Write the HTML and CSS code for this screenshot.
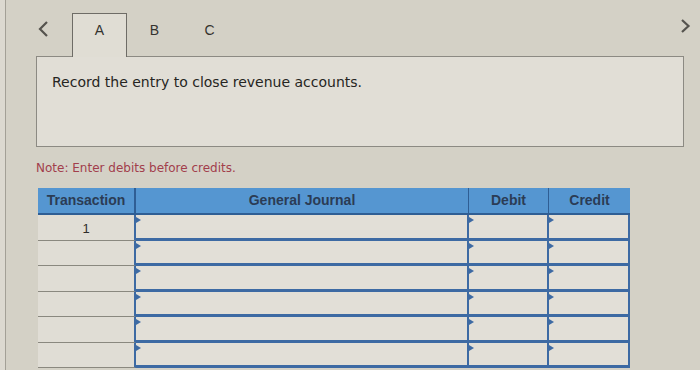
FILE: index.html
```html
<!DOCTYPE html>
<html>
<head>
<meta charset="utf-8">
<link rel="stylesheet" href="styles.css">
</head>
<body>
<div class="screen">
  <div class="edge"></div>
  <div class="page">
    <div class="nav">
      <span class="chev chev-left"><svg width="12" height="18" viewBox="0 0 12 18"><path d="M10 2 L3 9 L10 16" fill="none" stroke="#55534e" stroke-width="2.2"/></svg></span>
      <div class="tabs">
        <div class="tab active">A</div>
        <div class="tab">B</div>
        <div class="tab">C</div>
      </div>
      <span class="chev chev-right"><svg width="11" height="16" viewBox="0 0 11 16"><path d="M2 2 L8.5 8 L2 14" fill="none" stroke="#55534e" stroke-width="2.2"/></svg></span>
    </div>
    <div class="question">Record the entry to close revenue accounts.</div>
    <div class="note">Note: Enter debits before credits.</div>
    <div class="journal">
      <div class="th">Transaction</div>
      <div class="th">General Journal</div>
      <div class="th">Debit</div>
      <div class="th">Credit</div>

      <div class="tc">1</div><div class="in gj"></div><div class="in"></div><div class="in"></div>
      <div class="tc"></div><div class="in gj"></div><div class="in"></div><div class="in"></div>
      <div class="tc"></div><div class="in gj"></div><div class="in"></div><div class="in"></div>
      <div class="tc"></div><div class="in gj"></div><div class="in"></div><div class="in"></div>
      <div class="tc"></div><div class="in gj"></div><div class="in"></div><div class="in"></div>
      <div class="tc"></div><div class="in gj"></div><div class="in"></div><div class="in"></div>
    </div>
  </div>
</div>
</body>
</html>
```
FILE: styles.css
```css
html, body {
  margin: 0;
  padding: 0;
}
body {
  width: 700px;
  height: 370px;
  overflow: hidden;
  background: #d4d1c6;
  font-family: "DejaVu Sans", Verdana, sans-serif;
}
.screen {
  display: flex;
  height: 370px;
}
.edge {
  width: 5px;
  flex: none;
  background: #dcd9d0;
  border-right: 1px solid #a3a096;
}
.page {
  flex: 1;
  padding-left: 29px;
}
.nav {
  height: 56px;
  display: flex;
  align-items: flex-start;
}
.chev {
  display: block;
}
.chev-left {
  margin-top: 20px;
  margin-left: 2px;
  width: 12px;
  height: 18px;
}
.tabs {
  display: flex;
  margin-left: 23px;
  margin-top: 13px;
}
.tab {
  width: 55px;
  height: 43px;
  box-sizing: border-box;
  display: flex;
  justify-content: center;
  padding-top: 9px;
  font-family: "Liberation Sans", Arial, sans-serif;
  font-size: 14px;
  color: #34332f;
}
.tab.active {
  background: #e0ddd4;
  border: 1px solid #6e6c66;
  border-bottom: none;
  height: 44px;
  padding-top: 8px;
}
.chev-right {
  margin-left: auto;
  margin-right: 9px;
  margin-top: 18px;
  width: 11px;
  height: 16px;
}
.question {
  margin-left: 1px;
  width: 648px;
  height: 91px;
  box-sizing: border-box;
  border: 1px solid #8c8a83;
  background: #e1ded6;
  padding: 17px 0 0 15px;
  font-size: 14px;
  color: #262522;
}
.note {
  margin-top: 14px;
  margin-left: 1px;
  font-size: 12px;
  color: #a23e4c;
}
.journal {
  margin-top: 13px;
  margin-left: 3px;
  display: grid;
  grid-template-columns: 98px 333px 80px 81px;
  grid-template-rows: 27px repeat(6, 25.5px);
}
.th {
  background: #5596d1;
  border-bottom: 2px solid #2f5e94;
  border-right: 1px solid #2f5e94;
  font-family: "Liberation Sans", Arial, sans-serif;
  font-weight: bold;
  font-size: 14px;
  color: #2b3c55;
  display: flex;
  align-items: center;
  justify-content: center;
  box-sizing: border-box;
  padding-bottom: 2px;
}
.th:first-child {
  border-right: 2px solid #2f5e94;
}
.th:nth-child(4) {
  border-right: none;
}
.tc {
  background: #e0ddd5;
  border-bottom: 1px solid #8a887f;
  border-right: 2px solid #3d6aa3;
  box-sizing: border-box;
  font-family: "Liberation Sans", Arial, sans-serif;
  font-size: 13px;
  color: #2e2d2a;
  text-align: center;
  padding-top: 6px;
}
.in {
  position: relative;
  background: #e2dfd7;
  border-bottom: 3px solid #3d6aa3;
  border-right: 2px solid #3d6aa3;
  box-sizing: border-box;
}
.in::before {
  content: "";
  position: absolute;
  left: 0;
  top: 2px;
  border-top: 3px solid transparent;
  border-bottom: 3px solid transparent;
  border-left: 5px solid #3d6aa3;
}
```
